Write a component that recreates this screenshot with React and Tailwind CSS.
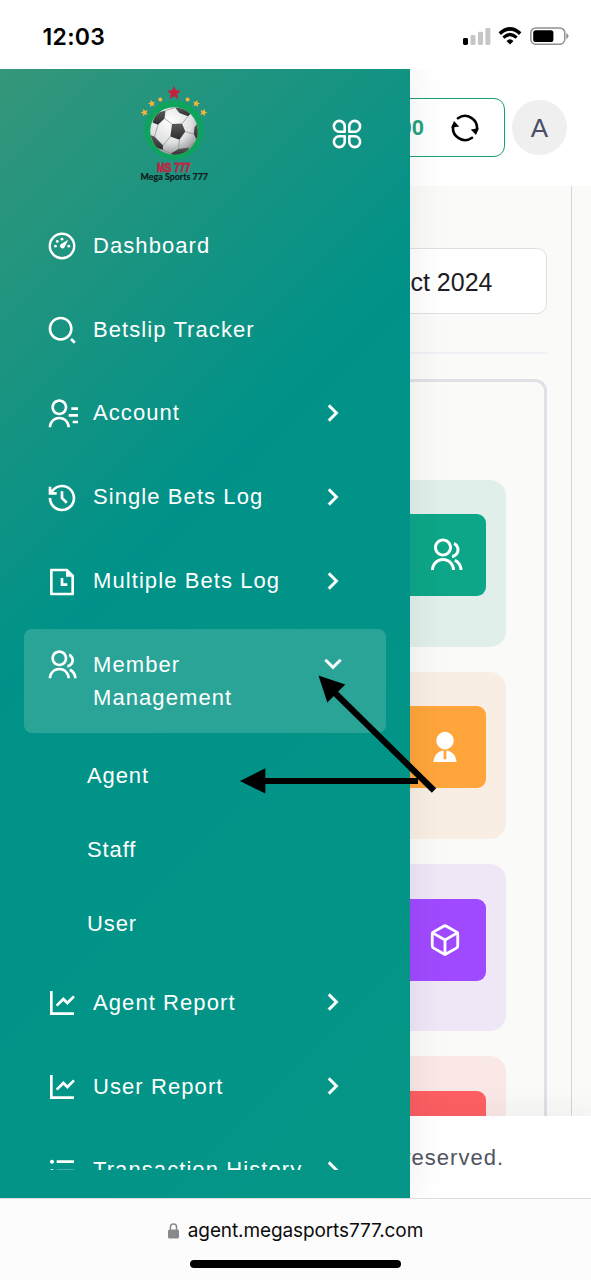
import React from "react";
import {
  RiSearch2Line,
  RiContactsLine,
  RiHistoryLine,
  RiFileHistoryLine,
  RiGroupLine,
  RiLineChartLine,
  RiListUnordered,
  RiArrowRightSLine,
  RiArrowDownSLine,
} from "react-icons/ri";
import { FiBox } from "react-icons/fi";

const STAR = "M0,-1 L0.26,-0.36 L0.95,-0.31 L0.42,0.14 L0.59,0.81 L0,0.45 L-0.59,0.81 L-0.42,0.14 L-0.95,-0.31 L-0.26,-0.36 Z";

function StatusBar() {
  return (
    <div className="flex h-[69px] shrink-0 items-start justify-between bg-white pr-[22px] pl-[42.5px]">
      <span className="mt-[20.5px] font-['Inter',sans-serif] text-[23px] leading-[32px] font-semibold tracking-[0.3px] text-black">12:03</span>
      <div className="mt-[27px] flex items-start">
        <svg width="28" height="18" viewBox="0 0 28 18">
          <rect x="0" y="11" width="5" height="7" rx="1.4" fill="#000" />
          <rect x="7.5" y="8" width="5" height="10" rx="1.4" fill="#c6c6c6" />
          <rect x="15" y="4.7" width="5" height="13.3" rx="1.4" fill="#c6c6c6" />
          <rect x="22.4" y="1" width="5" height="17" rx="1.4" fill="#c6c6c6" />
        </svg>
        <svg className="ml-[7px]" width="24" height="18" viewBox="0 0 24 18">
          <path d="M1.8 6.6 Q12 -2.8 22.2 6.6" fill="none" stroke="#000" strokeWidth="3.6" />
          <path d="M5.4 10.6 Q12 4.4 18.6 10.6" fill="none" stroke="#000" strokeWidth="3.2" />
          <path d="M8.5 13.9 Q12 10.8 15.5 13.9 L12 17.6Z" fill="#000" />
        </svg>
        <svg className="ml-[8px]" width="39" height="18" viewBox="0 0 39 18">
          <rect x="0.8" y="0.9" width="34" height="16.4" rx="5" fill="none" stroke="#909090" strokeWidth="1.5" />
          <rect x="3.2" y="3.2" width="20.2" height="11.8" rx="2.6" fill="#000" />
          <path d="M36.3 6.2 Q38.6 7 38.6 9.1 Q38.6 11.2 36.3 12Z" fill="#909090" />
        </svg>
      </div>
    </div>
  );
}

function Logo() {
  return (
    <svg width="90" height="104" viewBox="130 82 90 104">
      <defs>
        <radialGradient id="ball" cx="0.42" cy="0.3" r="0.75">
          <stop offset="0" stopColor="#ffffff" />
          <stop offset="0.6" stopColor="#dfe0e1" />
          <stop offset="1" stopColor="#85898b" />
        </radialGradient>
        <linearGradient id="patch" x1="0" y1="0" x2="0" y2="1">
          <stop offset="0" stopColor="#5a5a5a" />
          <stop offset="1" stopColor="#2c2c2c" />
        </linearGradient>
        <clipPath id="ballClip">
          <circle cx="174" cy="131" r="23.8" />
        </clipPath>
      </defs>
      <circle cx="174" cy="130" r="29.5" fill="#0ea45c" />
      <path d={STAR} transform="translate(174 93) scale(7.3)" fill="#c6203a" />
      <g fill="#f3b63a">
        <circle cx="160.3" cy="99.5" r="2" />
        <circle cx="187.6" cy="99.5" r="2" />
        <path d={STAR} transform="translate(151.8 103.6) rotate(-12) scale(3.9)" />
        <path d={STAR} transform="translate(196.2 103.6) rotate(12) scale(3.9)" />
        <path d={STAR} transform="translate(144.5 112.5) rotate(-18) scale(4)" />
        <path d={STAR} transform="translate(203.5 112.5) rotate(18) scale(4)" />
      </g>
      <circle cx="174" cy="131" r="23.8" fill="url(#ball)" />
      <g clipPath="url(#ballClip)">
        <g fill="url(#patch)">
          <path d="M172 124 L182 123.5 L185.3 131.5 L179.4 139.8 L170.4 136.6Z" />
          <path d="M152.5 122.5 L156 113 L165.5 110.5 L164.5 118.5 L158 124.8Z" />
          <path d="M175 107.5 L184 107 L191 113.5 L188 116.3 L179.5 113Z" />
          <path d="M200 121 L194.6 127 L193.8 134 L197 140.5 L201 134Z" />
          <path d="M150 135 L154.5 136.5 L163 145.5 L162.8 150 L155 147Z" />
          <path d="M171 153.5 L178.5 149 L189 147.5 L187 156 L174 156Z" />
        </g>
        <g stroke="#8a8a8a" strokeWidth="0.7" fill="none">
          <path d="M172 124 L164.5 118.5 M182 123.5 L188 116.3 M185.3 131.5 L193.8 134 M179.4 139.8 L178.5 149 M170.4 136.6 L163 145.5" />
          <path d="M165.5 110.5 L175 107.5 M191 113.5 L197 122 M197 140 L189 147.5 M162.8 150 L171 153.5 M158 124.8 L154.5 136.5" />
        </g>
      </g>
      <text x="157" y="171.5" textLength="33.5" lengthAdjust="spacingAndGlyphs" fill="#b92a43" stroke="#b92a43" strokeWidth="0.8" fontFamily="Liberation Sans Narrow, Liberation Sans, sans-serif" fontWeight="700" fontSize="13">MS 777</text>
      <text x="140.5" y="180" textLength="67.5" lengthAdjust="spacingAndGlyphs" fill="#10201c" stroke="#10201c" strokeWidth="0.2" fontFamily="Lato, sans-serif" fontWeight="700" fontSize="8.8">Mega Sports 777</text>
    </svg>
  );
}

function PetalsIcon() {
  const petal = "M12.7 12.7 V7.3 A5.4 5.4 0 1 0 7.3 12.7 Z";
  return (
    <svg width="30" height="30" viewBox="0 0 30 30" fill="none" stroke="#fff" strokeWidth="2.6" strokeLinejoin="round">
      <path d={petal} />
      <path d={petal} transform="translate(30 0) scale(-1 1)" />
      <path d={petal} transform="translate(0 30) scale(1 -1)" />
      <path d={petal} transform="translate(30 30) scale(-1 -1)" />
    </svg>
  );
}

function GaugeIcon({ className }) {
  return (
    <svg className={className} viewBox="0 0 32 32" fill="#fff">
      <circle cx="16" cy="16" r="12.2" fill="none" stroke="#fff" strokeWidth="2.4" />
      <path d="M22.3 9.7 L18.4 17.6 A2.5 2.5 0 1 1 14.6 14.3Z" />
      <circle cx="9.4" cy="16.2" r="1.4" />
      <circle cx="11.3" cy="11.4" r="1.4" />
      <circle cx="16" cy="9.2" r="1.4" />
      <circle cx="22.8" cy="16.2" r="1.4" />
    </svg>
  );
}

function MenuRow({ icon: Icon, label, chevron, active }) {
  return (
    <div className={"flex shrink-0 items-start rounded-[8px] py-[18.9px] pr-[37.5px] pl-[21.5px] " + (active ? "bg-[#2ba498]" : "")}>
      <Icon className="mt-[1.5px] size-8 shrink-0" />
      <span className="ml-[15.5px] flex-1 text-[22px] leading-[33.3px] tracking-[1.08px]">
        {label}
      </span>
      {chevron === "right" && <RiArrowRightSLine className="mt-[0.5px] -ml-8 size-8 shrink-0" strokeWidth="0.3" />}
      {chevron === "down" && <RiArrowDownSLine className="size-8 shrink-0" strokeWidth="0.3" />}
    </div>
  );
}

function Drawer() {
  return (
    <aside className="absolute inset-y-0 left-0 flex w-[410px] flex-col bg-[linear-gradient(135deg,#35967a_0%,#009288_40%,#059687_100%)] text-white shadow-[0_0_36px_rgba(40,40,60,0.09)]">
      <div className="flex h-[141px] shrink-0 items-start justify-between pt-[13px] pr-[48.5px] pl-[130px]">
        <Logo />
        <div className="mt-[37px]">
          <PetalsIcon />
        </div>
      </div>
      <nav className="flex h-[959.5px] flex-col gap-[12.5px] overflow-hidden px-6">
        <MenuRow icon={GaugeIcon} label="Dashboard" />
        <MenuRow icon={RiSearch2Line} label="Betslip Tracker" />
        <MenuRow icon={RiContactsLine} label="Account" chevron="right" />
        <MenuRow icon={RiHistoryLine} label="Single Bets Log" chevron="right" />
        <MenuRow icon={RiFileHistoryLine} label="Multiple Bets Log" chevron="right" />
        <div className="-mt-[0.3px] shrink-0">
          <MenuRow icon={RiGroupLine} label="Member Management" chevron="down" active />
          <div className="mt-[5.5px] -mb-[6px] flex flex-col pl-[63px] text-[22px] tracking-[0.9px]">
            {["Agent", "Staff", "User"].map((name) => (
              <div key={name} className="flex h-[74px] items-center">{name}</div>
            ))}
          </div>
        </div>
        <MenuRow icon={RiLineChartLine} label="Agent Report" chevron="right" />
        <MenuRow icon={RiLineChartLine} label="User Report" chevron="right" />
        <MenuRow icon={RiListUnordered} label="Transaction History" chevron="right" />
      </nav>
    </aside>
  );
}

function SyncIcon() {
  return (
    <svg width="30" height="30" viewBox="0 0 30 30" fill="none" stroke="#000" strokeWidth="2.6" strokeLinecap="round">
      <path d="M8 5.2 A12 12 0 0 1 26.8 17" />
      <path d="M22 24.8 A12 12 0 0 1 3.2 13" />
      <path d="M20.8 16.4 L28.8 15.2 L26 22Z" fill="#000" stroke="none" />
      <path d="M9.2 13.6 L1.2 14.8 L4 8Z" fill="#000" stroke="none" />
    </svg>
  );
}

function TieUserIcon() {
  return (
    <svg width="24" height="32" viewBox="0 0 24 32" fill="#fff">
      <circle cx="12" cy="9.6" r="8.8" />
      <path d="M0.4 31 C1 23.5 5.3 20 10.6 19.4 V28.2 H13.4 V19.4 C18.7 20 23 23.5 23.6 31Z" />
    </svg>
  );
}

function StatCard({ card, tile, children }) {
  return (
    <div className={"h-[167px] w-[300px] shrink-0 rounded-[16px] pt-[34.5px] pr-[20.5px] " + card}>
      <div className={"ml-auto flex h-[82px] w-[120px] items-center justify-end rounded-[9px] pr-[24px] " + tile}>{children}</div>
    </div>
  );
}

function Page() {
  return (
    <div className="flex h-full flex-col bg-[#fafaf8]">
      <header className="flex h-[117px] shrink-0 items-center justify-end bg-white pr-6">
        <div className="flex h-[59px] w-[240px] items-center justify-end rounded-[11px] border-[1.5px] border-[#1b9d77] pr-[24px]">
          <span className="mr-[26px] text-[22px] font-bold text-[#27a07e]">0.00</span>
          <SyncIcon />
        </div>
        <div className="ml-[7px] flex size-[55px] items-center justify-center rounded-full bg-[#efeff0] pt-[1px] text-[26px] text-[#4a4d66]">A</div>
      </header>
      <div className="flex min-h-0 flex-1 justify-end">
        <div className="flex w-[500px] flex-col overflow-hidden border-r border-[#d6d6d8] pr-6">
          <div className="mt-[62px] flex h-[66px] shrink-0 items-center justify-end rounded-[10px] border-[1.5px] border-[#e0e0e2] bg-white pt-[3px] pr-[53.5px] text-[25px] text-[#1d1d22]">31 Oct 2024</div>
          <div className="mt-[38px] h-[1.5px] shrink-0 bg-[#f0f0f5]" />
          <div className="mt-[25px] flex flex-1 flex-col items-end gap-[25.3px] overflow-hidden rounded-t-[12px] border-3 border-b-0 border-[#e0e0e6] pt-[98px] pr-[38px]">
            <StatCard card="bg-[#e1efea]" tile="bg-[#0ea688]">
              <RiGroupLine className="-mr-[2px] size-9 text-white" />
            </StatCard>
            <StatCard card="bg-[#f9eee3]" tile="bg-[#ffa53b]">
              <div className="mr-[5px]">
                <TieUserIcon />
              </div>
            </StatCard>
            <StatCard card="bg-[#efe7f6]" tile="bg-[#a04aff]">
              <FiBox className="size-[34px] text-white" />
            </StatCard>
            <StatCard card="bg-[#fae8e6]" tile="bg-[#ff5f62]" />
          </div>
        </div>
        <div className="w-[19px]" />
      </div>
      <footer className="z-0 flex h-[82px] shrink-0 items-center justify-end bg-white pt-[1px] pr-[87px] text-[22px] tracking-[1px] text-[#50545f] shadow-[0_0_36px_rgba(40,40,60,0.08)]">
        All rights reserved.
      </footer>
    </div>
  );
}

function BrowserBar() {
  return (
    <div className="relative flex h-[82px] shrink-0 flex-col items-center border-t border-[#dcdcde] bg-[#fdfcfd]">
      <div className="mt-[16.5px] flex items-center">
        <svg className="mr-[9px]" width="11" height="16" viewBox="0 0 11 16">
          <rect x="0" y="6.5" width="11" height="9" rx="1.6" fill="#8a8a8c" />
          <path d="M2.4 7.5 V4.3 A3.1 3.2 0 0 1 8.6 4.3 V7.5" fill="none" stroke="#8a8a8c" strokeWidth="1.5" />
        </svg>
        <span className="font-['Inter',sans-serif] text-[19px] leading-[30px] tracking-[-0.11px] text-[#0c0c0c]">agent.megasports777.com</span>
      </div>
      <div className="mt-[14px] h-[8px] w-[211px] rounded-full bg-black" />
    </div>
  );
}

function Arrows() {
  return (
    <svg className="pointer-events-none absolute top-[660px] left-[230px]" width="220" height="145" viewBox="230 660 220 145">
      <g stroke="#000" strokeWidth="6.2">
        <path d="M434 790.5 L334 692" />
        <path d="M418 781 H262" />
      </g>
      <path d="M318.5 675.5 L345.3 684.6 L327.3 702.5Z" />
      <path d="M240 781 L265.3 768.2 V793.6Z" />
    </svg>
  );
}

export default function App() {
  return (
    <div className="relative flex h-[1280px] w-[591px] flex-col overflow-hidden bg-white font-['Liberation_Sans',Arial,sans-serif]">
      <StatusBar />
      <main className="relative h-[1129px] shrink-0 overflow-hidden">
        <Page />
        <Drawer />
      </main>
      <BrowserBar />
      <Arrows />
    </div>
  );
}
